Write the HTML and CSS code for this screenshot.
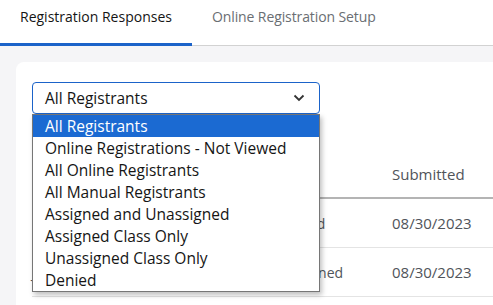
FILE: index.html
```html
<!DOCTYPE html>
<html>
  <head>
    <title>Registrations</title>
    <link rel="stylesheet" href="styles.css">
  </head>
  <body>
    <!-- tabs -->
    <nav class="tabs">
      <div class="tab active">Registration Responses</div>
      <div class="tab">Online Registration Setup</div>
    </nav>

    <main class="page">
      <section class="card">
        <div class="filter">
          <div class="select">
            <span>All Registrants</span>
            <svg class="chevron" width="12" height="8" viewBox="0 0 12 8">
              <path d="M1.5 1.5 L6 6 L10.5 1.5" fill="none" stroke="#333" stroke-width="1.8"/>
            </svg>
          </div>
          <ul class="options">
            <li class="selected">All Registrants</li>
            <li>Online Registrations - Not Viewed</li>
            <li>All Online Registrants</li>
            <li>All Manual Registrants</li>
            <li>Assigned and Unassigned</li>
            <li>Assigned Class Only</li>
            <li>Unassigned Class Only</li>
            <li>Denied</li>
          </ul>
        </div>

        <table class="responses">
          <thead>
            <tr>
              <th class="col-name">Name</th>
              <th class="col-status">Class</th>
              <th class="col-date">Submitted</th>
            </tr>
          </thead>
          <tbody>
            <tr>
              <td class="col-name">Smith, Anna</td>
              <td class="col-status">Assigned</td>
              <td class="col-date">08/30/2023</td>
            </tr>
            <tr>
              <td class="col-name">Jones, Mark</td>
              <td class="col-status">Unassigned</td>
              <td class="col-date">08/30/2023</td>
            </tr>
          </tbody>
        </table>
      </section>
    </main>
  </body>
</html>
```

FILE: styles.css
```css
body {
  margin: 0;
  padding: 0;
  background-color: rgb(245, 245, 247);
  font-family: "Open Sans", "Noto Sans", sans-serif;
  color: rgb(21, 21, 21);
  overflow: hidden;
}

/* tabs */
.tabs {
  display: flex;
  background-color: white;
  height: 46px;
  border-bottom: 1px solid rgb(210, 210, 210);
  box-sizing: border-box;
}
.tab {
  padding: 0 20px;
  font-size: 14px;
  line-height: 34px;
  height: 45px;
  box-sizing: border-box;
  color: rgb(106, 110, 115);
  letter-spacing: -0.1px;
}
.tab.active {
  color: rgb(21, 21, 21);
  font-weight: 500;
  letter-spacing: 0;
  border-bottom: 3px solid rgb(27, 99, 201);
  height: 46px;
  margin-bottom: -1px;
}

.page {
  padding: 16px 0 0 16px;
}
.card {
  background-color: white;
  border-radius: 8px 0 0 0;
  padding: 20px 0 0 16px;
  height: 400px;
}

/* filter select */
.filter {
  position: relative;
  width: 288px;
}
.select {
  display: flex;
  align-items: center;
  justify-content: space-between;
  height: 32px;
  box-sizing: border-box;
  border: 1px solid rgb(27, 99, 201);
  border-radius: 4px;
  padding: 0 14px 0 12px;
  font-size: 15.5px;
}
.options {
  position: absolute;
  top: 32px;
  left: 0;
  width: 288px;
  box-sizing: border-box;
  margin: 0;
  padding: 0;
  list-style: none;
  background-color: white;
  border: 1px solid rgb(118, 118, 118);
  box-shadow: 2px 3px 5px rgba(0, 0, 0, 0.25);
  z-index: 10;
}
.options li {
  height: 22px;
  line-height: 22px;
  padding-left: 12px;
  font-size: 15.5px;
}
.options li.selected {
  background-color: rgb(27, 106, 210);
  color: white;
}

/* table */
.responses {
  border-collapse: collapse;
  table-layout: fixed;
  margin-top: 37px;
  width: 520px;
  font-size: 15px;
  color: rgb(80, 84, 90);
}
.responses th,
.responses td {
  padding: 0;
  text-align: left;
  vertical-align: middle;
}
.responses th {
  font-weight: normal;
  height: 46px;
  border-bottom: 2px solid rgb(180, 180, 180);
}
.responses td {
  height: 48px;
  border-bottom: 1px solid rgb(228, 228, 228);
}
.col-name {
  width: 235px;
}
.col-status {
  width: 125px;
}
.responses td.col-status {
  font-size: 14px;
}
.col-date {
  width: 160px;
}
```
